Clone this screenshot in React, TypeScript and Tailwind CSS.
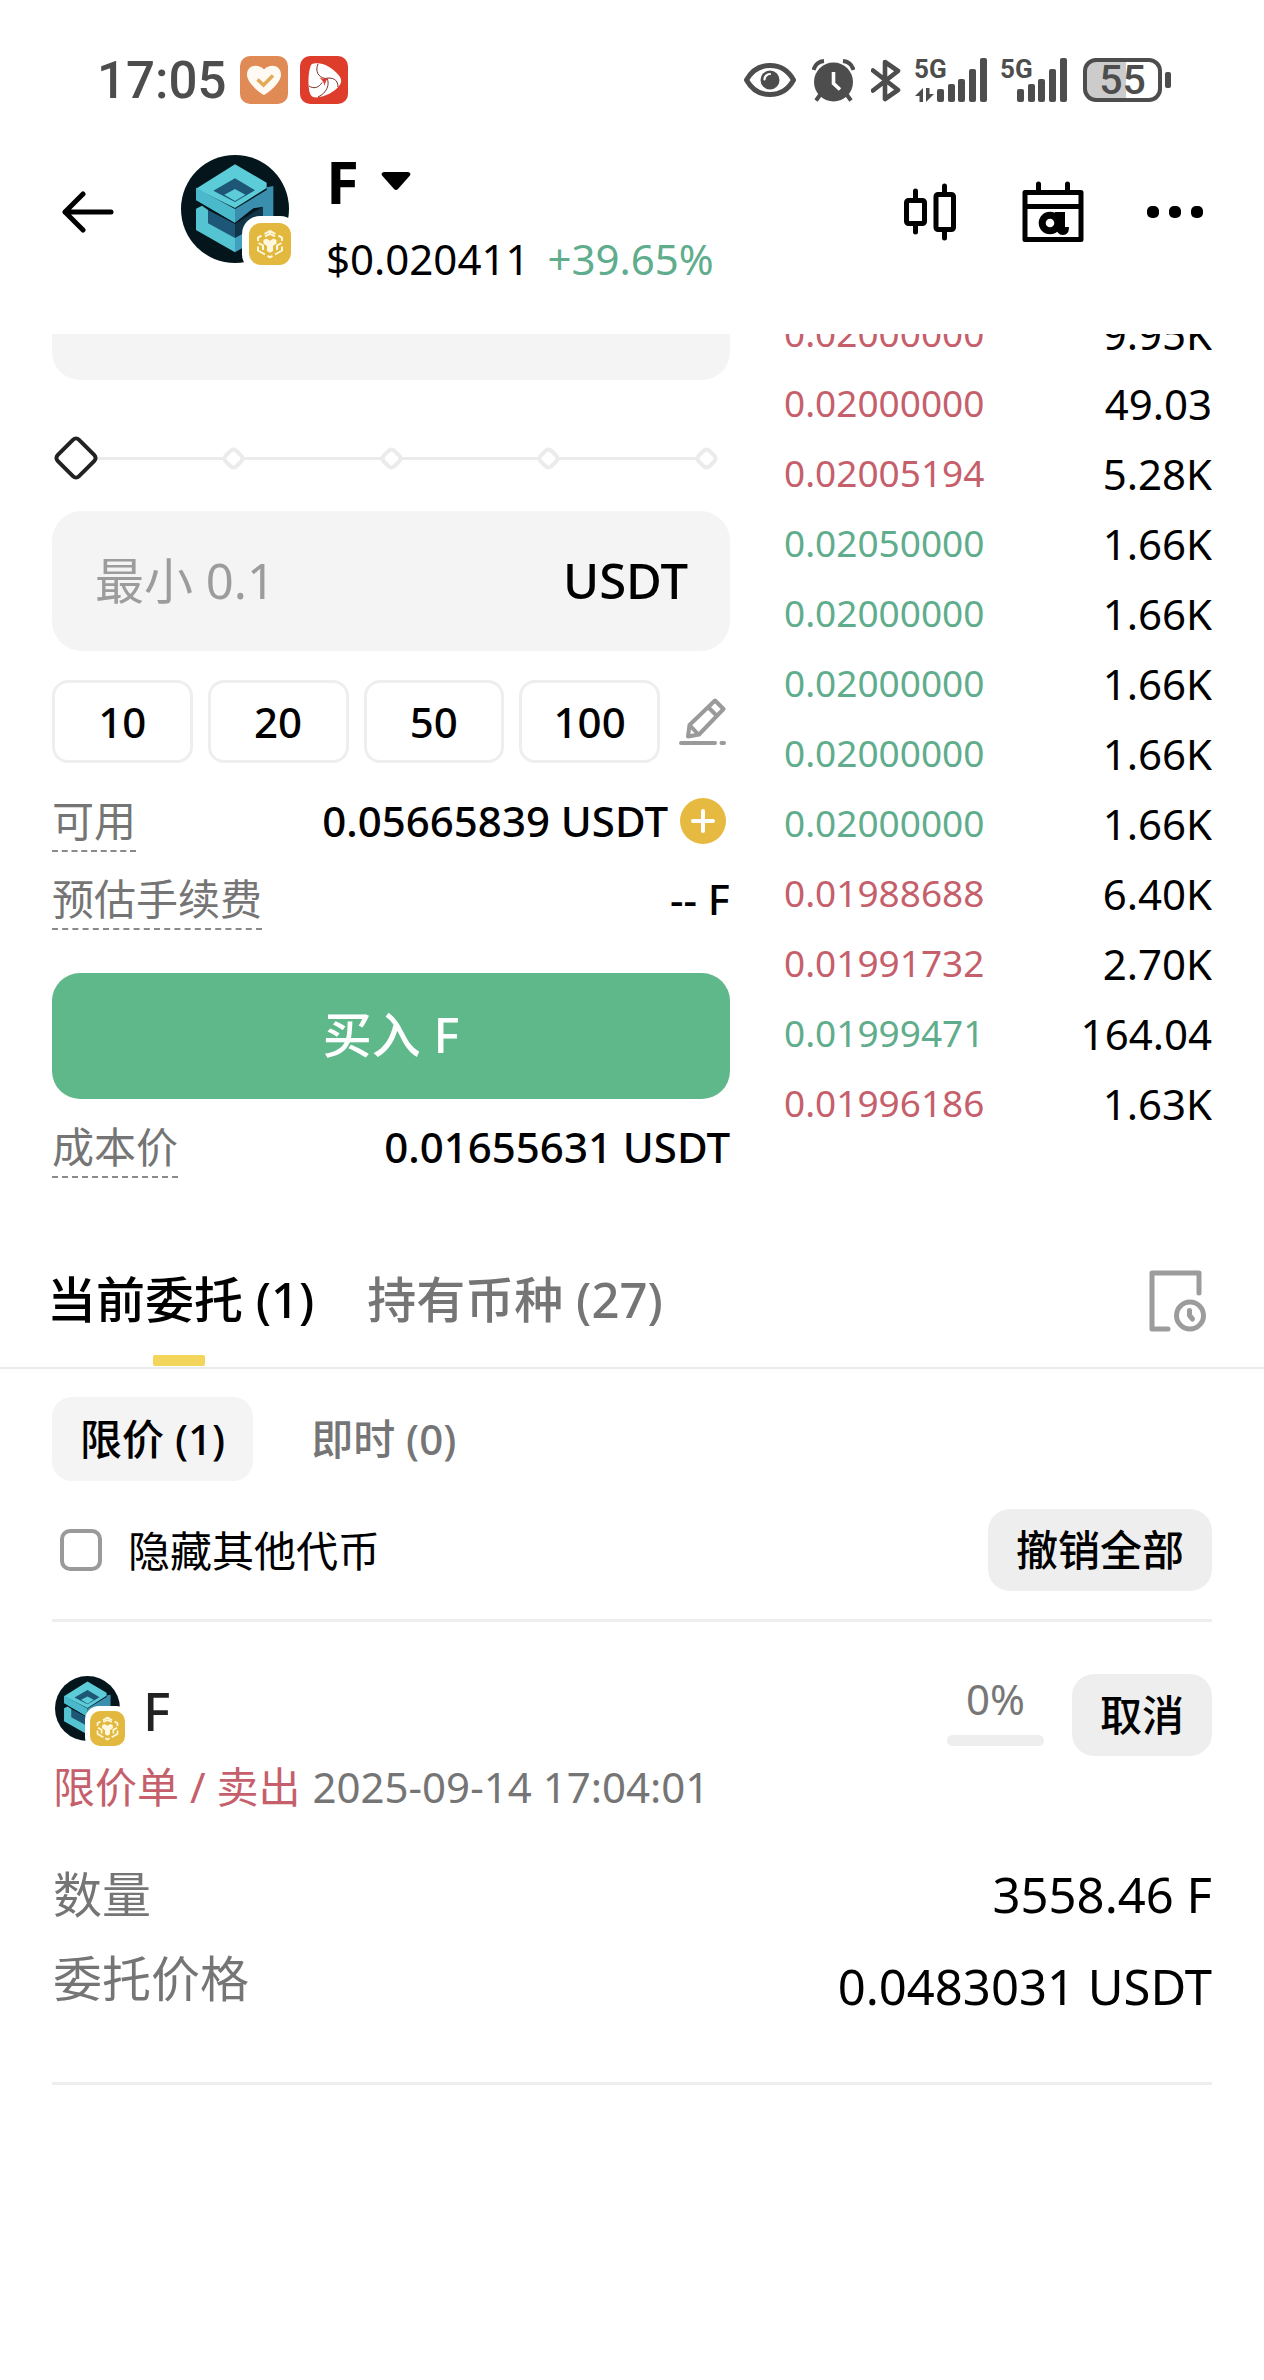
import React, { useState } from 'react';

const FONT = "font-['Noto_Sans','Noto_Sans_CJK_SC',sans-serif]";

const RED = 'text-[#c65f6c]';
const GREEN = 'text-[#5fad8c]';

const trades = [
  { price: '0.02000000', amount: '9.95K', color: RED },
  { price: '0.02000000', amount: '49.03', color: RED },
  { price: '0.02005194', amount: '5.28K', color: RED },
  { price: '0.02050000', amount: '1.66K', color: GREEN },
  { price: '0.02000000', amount: '1.66K', color: GREEN },
  { price: '0.02000000', amount: '1.66K', color: GREEN },
  { price: '0.02000000', amount: '1.66K', color: GREEN },
  { price: '0.02000000', amount: '1.66K', color: GREEN },
  { price: '0.01988688', amount: '6.40K', color: RED },
  { price: '0.01991732', amount: '2.70K', color: RED },
  { price: '0.01999471', amount: '164.04', color: GREEN },
  { price: '0.01996186', amount: '1.63K', color: RED },
];

function HeartAppIcon() {
  return (
    <svg viewBox="0 0 48 48" className="size-12">
      <rect width="48" height="48" rx="10" fill="#e08a55" />
      <path d="M24 39C20 37 7 27 7 18.5C7 9 18 7 24 13.5C30 7 41 9 41 18.5C41 27 28 37 24 39Z" fill="#fffaf3" />
      <path d="M17.5 23.5l6 5.5 9.500-9.500" fill="none" stroke="#e3aa55" strokeWidth="3.500" />
    </svg>
  );
}

function SwirlAppIcon() {
  return (
    <svg viewBox="0 0 48 48" className="size-12">
      <rect width="48" height="48" rx="10" fill="#df3d2c" />
      <path
        d="M14 7.500C22 6 32 11 38.500 19C42 23 42 26.500 39 30C34 36 26 40.500 16 41.500C11.500 41.500 9.500 38 9 33C8 25 8.500 16 10.500 10.500C11 8.500 12 7.700 14 7.500Z"
        fill="#fff"
      />
      <path
        d="M18 8C15 15 18 21 25 22.500C32 21 38 23 38 31M27 22.500C30 28 27 37 18 41M22 26.500C19 32 13 33 9 30"
        fill="none"
        stroke="#7d322b"
        strokeWidth="1"
      />
      <path d="M19.500 21.500c4 1.500 6 1.500 9 .5-2.500 2.500-3.500 4.500-3.700 8-1-3.500-2.300-6-5.300-8.500z" fill="#df3d2c" />
    </svg>
  );
}

function EyeStatusIcon() {
  return (
    <svg viewBox="0 0 52 34" className="h-[34px] w-[52px]">
      <path d="M2.500 17C8 7 17 2.500 26 2.500S44 7 49.500 17C44 27 35 31.500 26 31.500S8 27 2.500 17Z" fill="none" stroke="#4d4d4d" strokeWidth="5" strokeLinejoin="round" />
      <circle cx="26" cy="17" r="9.500" fill="#4d4d4d" />
      <path d="M20.500 16.500a5.500 5.500 0 0 1 5.500-5.500" fill="none" stroke="#fff" strokeWidth="2.200" strokeLinecap="round" />
    </svg>
  );
}

function AlarmStatusIcon() {
  return (
    <svg viewBox="0 0 43 43" className="size-[43px]">
      <path d="M1.500 11C3 5.500 6 2.500 12 2M41.500 11C40 5.500 37 2.500 31 2" fill="none" stroke="#4d4d4d" strokeWidth="4" />
      <path d="M8 36l-4 5.500M35 36l4 5.500" stroke="#4d4d4d" strokeWidth="4" />
      <circle cx="21.500" cy="23" r="19.500" fill="#4d4d4d" />
      <path d="M21.500 13v11.500l6.500 6" fill="none" stroke="#fff" strokeWidth="3.600" />
    </svg>
  );
}

function BluetoothStatusIcon() {
  return (
    <svg viewBox="0 0 30 43" className="h-[43px] w-[30px]">
      <path d="M2 11.500L27 31 14 40V3l13 9L2 31.500" fill="none" stroke="#4d4d4d" strokeWidth="4.600" strokeLinejoin="round" strokeLinecap="round" />
    </svg>
  );
}

function SignalIcon({ arrows }: { arrows?: boolean }) {
  const x = arrows ? 22 : 16;
  return (
    <svg viewBox={arrows ? '-2 -9 74 64' : '-2 -9 68 64'} className={arrows ? 'h-16 w-[74px]' : 'h-16 w-[68px]'} fill="#4d4d4d">
      <text x="-1" y="21" fontSize="26" fontWeight="700" fontFamily="Roboto, sans-serif">5G</text>
      {arrows && <path d="M8 31v14H4.500v-6H0zM11 45V31h3.500v6H19z" />}
      <rect x={x} y="32" width="7" height="13" rx="2" />
      <rect x={x + 11} y="27" width="7" height="18" rx="2" />
      <rect x={x + 21} y="22" width="7" height="23" rx="2" />
      <rect x={x + 32} y="12" width="7" height="33" rx="2" />
      <rect x={x + 43} y="1" width="7" height="44" rx="2" />
    </svg>
  );
}

function StatusBar() {
  return (
    <div className="flex h-[150px] items-center justify-between pt-[10px] pr-[93px] pl-[97px] text-[#4d4d4d]">
      <div className="flex items-center">
        <span className="mr-[14px] font-[Roboto,sans-serif] text-[51px] leading-none font-medium">17:05</span>
        <div className="flex gap-3">
          <HeartAppIcon />
          <SwirlAppIcon />
        </div>
      </div>
      <div className="flex items-center">
        <EyeStatusIcon />
        <span className="ml-4"><AlarmStatusIcon /></span>
        <span className="ml-4"><BluetoothStatusIcon /></span>
        <span className="ml-3"><SignalIcon arrows /></span>
        <span className="ml-3"><SignalIcon /></span>
        <span className="ml-4 flex h-[44px] w-[79px] items-center justify-center rounded-[13px] border-4 border-[#4d4d4d] bg-linear-to-r from-[#cccccc] from-55% to-white to-55% font-[Roboto,sans-serif] text-[41px] leading-none font-medium">
          55
        </span>
        <span className="ml-[3px] h-4 w-[6px] rounded-xs bg-[#4d4d4d]" />
      </div>
    </div>
  );
}

function CoinLogo({ small }: { small?: boolean }) {
  return (
    <span className={small ? 'relative block size-[65px]' : 'relative block size-[108px]'}>
      <svg viewBox="15 15 324 324" className="size-full">
        <circle cx="177" cy="177" r="162" fill="#04161c" />
        <path d="M60 142V118L177 184V218L60 150Z" fill="#4bb9cc" />
        <path d="M177 43L272 98V114L177 174L60 116Z" fill="#5cccd8" />
        <path d="M60 113L177 177V218L60 150Z" fill="#4bb9cc" />
        <path d="M177 177L272 120V112L292 108V210H260V170L232 175L177 218Z" fill="#3a8fae" />
        <path d="M177 85L237 121L177 156L112 122Z" fill="#1d5676" />
        <path d="M177 117L208 134L177 153L145 134Z" fill="#5cccd8" />
        <path d="M95 180L177 222L260 170V250H200L177 266L95 222Z" fill="#123449" />
        <path d="M95 180L177 222V266L95 222Z" fill="#1d5676" />
        <path d="M60 176L78 167L96 180V220L177 264V307L60 240Z" fill="#55c4d2" />
        <path d="M177 264L262 216V258L177 307Z" fill="#3f9fbc" />
      </svg>
      <span
        className={
          small
            ? 'absolute -right-[10px] -bottom-[10px] block size-[45px] rounded-[14px] bg-white p-[5px]'
            : 'absolute -right-[9px] -bottom-[9px] block size-14 rounded-[18px] bg-white p-[7px]'
        }
      >
        <svg viewBox="0 0 42 42" className="size-full">
          <rect width="42" height="42" rx="12" fill="#e3b83e" />
          <g fill="none" stroke="#fff8de" strokeWidth="2" strokeLinejoin="round">
            <path d="M15.500 11L21 7.800L26.500 11M29.500 12.700L33 14.700V18M33 23.500V27.500L26 31.500M16 31.500L9 27.500V23.500M9 18V14.700L12.500 12.700M18.500 32.800L21 34.300L23.500 32.800" />
            <path d="M16 13.300L21 10.800L26 13.300M9.500 20L14 22.500V27M32.500 20L28 22.500V27" />
          </g>
          <path d="M14.500 17L17.500 15.500L21 17.800L24.500 15.500L27.500 17V20.500L24 23V28L21 29.700L18 28V23L14.500 20.500Z" fill="#fff8de" />
        </svg>
      </span>
    </span>
  );
}

function Header() {
  return (
    <header className="flex items-start pr-[60px] pb-[44px] pl-[62px]">
      <button aria-label="返回" className="flex h-[124px] items-center">
        <svg viewBox="0 0 52 42" className="h-[42px] w-[52px]">
          <path d="M21 3L3 21L21 39M3 21H49" fill="none" stroke="#000" strokeWidth="5" strokeLinecap="round" strokeLinejoin="round" />
        </svg>
      </button>
      <div className="ml-[67px] flex h-[118px] items-center">
        <CoinLogo />
      </div>
      <div className="ml-[37px] flex flex-col gap-4 leading-[62px]">
        <button className="flex items-center gap-[22px] text-left text-[60px] font-bold">
          F
          <svg viewBox="0 0 30 20" className="h-5 w-[30px]">
            <path d="M3 1H27Q31 2 28.500 5L17 18Q15 20 13 18L1.500 5Q-1 2 3 1Z" />
          </svg>
        </button>
        <p className="flex gap-[18px] text-[42px]">
          <span>$0.020411</span>
          <span className={GREEN}>+39.65%</span>
        </p>
      </div>
      <div className="ml-auto flex h-[124px] items-center">
        <button aria-label="K线图">
          <svg viewBox="0 0 52 58" className="h-[58px] w-[52px]" fill="none" stroke="#000" strokeWidth="5" strokeLinecap="round">
            <rect x="2.500" y="17.500" width="18" height="23" rx="2" />
            <path d="M11.500 8v9M11.500 41v8M40.500 3v8M40.500 47v8" />
            <rect x="32" y="11.500" width="17.500" height="35" rx="2" />
          </svg>
        </button>
        <button aria-label="Alpha 日历" className="ml-[66px]">
          <svg viewBox="0 0 62 62" className="size-[62px]">
            <path d="M3 11.500H59V58.500H3ZM3 25.500H59M16.500 3V11M45.500 3V11" fill="none" stroke="#000" strokeWidth="5" strokeLinecap="round" strokeLinejoin="round" />
            <circle cx="28" cy="42" r="7.800" fill="none" stroke="#000" strokeWidth="7" />
            <path d="M33 31H43V46H47Q47 54 41 54Q36 54 34 48Z" fill="#000" />
          </svg>
        </button>
        <button aria-label="更多" className="ml-[62px]">
          <svg viewBox="0 0 58 14" className="h-[14px] w-[58px]">
            <rect x="1" y="1" width="12" height="12" rx="5" />
            <rect x="23" y="1" width="12" height="12" rx="5" />
            <rect x="45" y="1" width="12" height="12" rx="5" />
          </svg>
        </button>
      </div>
    </header>
  );
}

function AmountSlider() {
  const [value, setValue] = useState(0);
  return (
    <div className="relative mx-6 mt-[54px] flex h-12 items-center justify-between">
      <span className="absolute inset-x-0 top-[23px] h-[3px] bg-[#ebebeb]" />
      {[0, 25, 50, 75, 100].map((step) => (
        <span key={step} className="relative flex w-0 justify-center">
          {step === value ? (
            <span className="size-[34px] shrink-0 rotate-45 rounded-[6px] border-4 border-[#222] bg-white" />
          ) : (
            <span className="size-[19px] shrink-0 rotate-45 rounded-[6px] border-4 border-[#ebebeb] bg-white" />
          )}
        </span>
      ))}
      <input
        type="range"
        aria-label="数量比例"
        min={0}
        max={100}
        step={25}
        value={value}
        onChange={(e) => setValue(Number(e.target.value))}
        className="absolute inset-0 w-full opacity-0"
      />
    </div>
  );
}

function InfoRow({ label, className, children }: { label: string; className: string; children: React.ReactNode }) {
  return (
    <div className={`flex items-start justify-between text-[42px] leading-[50px] ${className}`}>
      <span className="border-b-2 border-dashed border-[#8a8a8a] pb-1 text-[#757575]">{label}</span>
      <span className="flex items-center gap-3 font-medium">{children}</span>
    </div>
  );
}

function TradeForm() {
  return (
    <section>
      <div className="h-[46px] rounded-b-[28px] bg-[#f4f4f4]" />
      <AmountSlider />
      <label className="mt-[29px] flex h-[140px] items-center justify-between rounded-[30px] bg-[#f4f4f4] pr-[42px] pl-[43px] text-[49px]">
        <input aria-label="金额" placeholder="最小 0.1" className="w-0 min-w-0 flex-1 bg-transparent outline-none placeholder:text-[#9c9c9c]" />
        <span className="font-medium">USDT</span>
      </label>
      <div className="mt-[29px] flex items-center gap-[15px]">
        {['10', '20', '50', '100'].map((n) => (
          <button key={n} className="h-[83px] flex-1 rounded-2xl border-[3px] border-[#eeeeee] text-[42px] font-medium">
            {n}
          </button>
        ))}
        <button aria-label="编辑" className="mx-1">
          <svg viewBox="0 0 47 47" className="size-[47px]" fill="none" stroke="#9a9a9a" strokeWidth="4">
            <path d="M36 2.500L44.500 11L20 36.500L9 38.500L10.500 27ZM29.500 9.500L37.500 17.500M10.500 27L19 36" strokeLinejoin="round" />
            <path d="M2 45H36M42.500 45H45" strokeLinecap="round" />
          </svg>
        </button>
      </div>
      <InfoRow label="可用" className="mt-[33px]">
        0.05665839 USDT
        <button aria-label="充值" className="mr-1">
          <svg viewBox="0 0 46 46" className="size-[46px]">
            <circle cx="23" cy="23" r="23" fill="#e6b940" />
            <path d="M23 13V33M13 23H33" stroke="#fff" strokeWidth="4" strokeLinecap="round" />
          </svg>
        </button>
      </InfoRow>
      <InfoRow label="预估手续费" className="mt-[22px]">-- F</InfoRow>
      <button className="mt-[43px] h-[126px] w-full rounded-[28px] bg-[#5eb88a] pb-[2px] text-[49px] font-medium text-white">买入 F</button>
      <InfoRow label="成本价" className="mt-[23px]">0.01655631 USDT</InfoRow>
    </section>
  );
}

function TradeList() {
  return (
    <section className="overflow-hidden">
      <table className="-mt-[36px] w-full">
        <tbody>
          {trades.map((t, i) => (
            <tr key={i} className="h-[70px]">
              <td className={`py-0 text-left text-[37px] ${t.color}`}>{t.price}</td>
              <td className="py-0 text-right text-[42px]">{t.amount}</td>
            </tr>
          ))}
        </tbody>
      </table>
    </section>
  );
}

function OrderTabs() {
  return (
    <nav className="mt-[71px] flex h-[120px] items-start justify-between border-b-2 border-[#ebebeb] pr-[57px] pl-[47px] text-[49px]">
      <div className="flex gap-[53px]">
        <button className="relative h-[102px] font-medium">
          当前委托 (1)
          <span className="absolute top-[106px] left-1/2 -ml-[28px] h-[11px] w-[52px] rounded-xs bg-[#f3d55b]" />
        </button>
        <button className="h-[102px] font-medium text-[#757575]">持有币种 (27)</button>
      </div>
      <button aria-label="历史委托" className="flex h-[104px] items-center">
        <svg viewBox="0 0 58 62" className="h-[62px] w-[58px]" fill="none" stroke="#9c9c9c" strokeWidth="5" strokeLinecap="round" strokeLinejoin="round">
          <path d="M19 59H3V3H50V23" />
          <circle cx="41" cy="45.500" r="13.500" />
          <path d="M40.500 40.500V45.500L43.500 49" />
        </svg>
      </button>
    </nav>
  );
}

function Orders() {
  return (
    <section className="px-[52px]">
      <div className="mt-7 flex h-[84px] items-stretch text-[42px] font-medium">
        <button className="rounded-[20px] bg-[#f4f4f4] px-7 pb-[2px]">限价 (1)</button>
        <button className="px-[58px] pb-[2px] text-[#757575]">即时 (0)</button>
      </div>
      <div className="mt-7 flex items-center justify-between">
        <label className="flex items-center gap-[26px] pl-2 text-[42px]">
          <input type="checkbox" className="size-[42px] appearance-none rounded-[10px] border-4 border-[#9a9a9a]" />
          隐藏其他代币
        </label>
        <button className="h-[82px] rounded-[22px] bg-[#eeeeee] px-7 pb-[2px] text-[42px] font-medium">撤销全部</button>
      </div>
      <article className="mt-7 border-y-[3px] border-[#eeeeee] pt-[52px] pb-[66px]">
        <div className="flex h-[82px] items-start">
          <span className="mt-[2px] ml-[3px]"><CoinLogo small /></span>
          <span className="ml-[23px] text-[52px] leading-[74px] font-medium text-[#222]">F</span>
          <div className="ml-auto flex w-[97px] flex-col items-center gap-[11px]">
            <span className="text-[42px] leading-[50px] text-[#777777]">0%</span>
            <span className="h-[11px] w-full rounded-full bg-[#eeeeee]" />
          </div>
          <button className="ml-7 h-[82px] rounded-[22px] bg-[#eeeeee] px-7 pb-[2px] text-[42px] font-medium">取消</button>
        </div>
        <p className="flex gap-3 pl-[1px] text-[42px] leading-[62px]">
          <span className={RED}>限价单 / 卖出</span>
          <time className="text-[#757575]">2025-09-14 17:04:01</time>
        </p>
        <dl className="mt-[46px] grid grid-cols-[auto_auto] justify-between text-[49px] leading-[60px]">
          <dt className="pl-[1px] text-[#757575]">数量</dt>
          <dd className="text-right">3558.46 F</dd>
          <dt className="mt-6 pl-[1px] text-[#757575]">委托价格</dt>
          <dd className="mt-8 text-right">0.0483031 USDT</dd>
        </dl>
      </article>
    </section>
  );
}

export default function App() {
  return (
    <main className={`min-h-screen bg-white text-black ${FONT}`}>
      <StatusBar />
      <Header />
      <div className="grid grid-cols-[678fr_428fr] gap-[54px] px-[52px]">
        <TradeForm />
        <TradeList />
      </div>
      <OrderTabs />
      <Orders />
    </main>
  );
}
